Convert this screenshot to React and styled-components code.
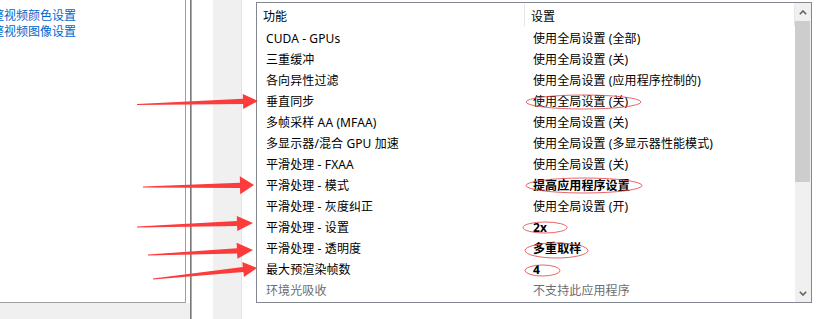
import styled, { createGlobalStyle } from "styled-components";

const GlobalStyle = createGlobalStyle`
  html, body {
    margin: 0;
    padding: 0;
    background: #ffffff;
  }
  body {
    font-family: "Noto Sans", "Noto Sans CJK SC", sans-serif;
    font-size: 12px;
  }
`;

const Page = styled.div`
  position: relative;
  display: flex;
  width: 827px;
  height: 319px;
  overflow: hidden;
  background: #ffffff;
`;

const LeftColumn = styled.div`
  display: flex;
  flex-direction: column;
  width: 190px;
  background: #f0f0f0;
`;

const LeftTop = styled.div`
  display: flex;
  height: 303px;
  background: #ffffff;
`;

const TreePanel = styled.div`
  width: 186px;
  box-sizing: border-box;
  border-right: 1px solid #a0a0a0;
  border-bottom: 1px solid #a0a0a0;
  padding-top: 7px;
  overflow: hidden;
`;

const TreeLink = styled.div`
  margin-left: -8px;
  color: #0066cc;
  line-height: 16px;
  white-space: nowrap;
  font-family: "Noto Sans CJK SC", sans-serif;
`;

const Splitter = styled.div`
  width: 1px;
  border-left: 1px solid #7a7a7a;
  background: #a9a9a9;
`;

const Gutter = styled.div`
  display: flex;
  width: 64px;
`;

const GutterStrip = styled.div`
  margin-left: 21px;
  width: 28px;
  background: #f0f0f0;
  border-right: 1px solid #e3e3e3;
`;

const RightArea = styled.div`
  flex: 1;
  padding-top: 2px;
`;

const ListBox = styled.div`
  display: flex;
  width: 556px;
  height: 301px;
  box-sizing: border-box;
  border: 1px solid #828790;
  background: #ffffff;
  overflow: hidden;
`;

const ListBody = styled.div`
  flex: 1;
  display: flex;
  flex-direction: column;
  overflow: hidden;
`;

const HeaderRow = styled.div`
  display: grid;
  grid-template-columns: 268px 1fr;
  height: 25px;
  flex-shrink: 0;
`;

const HeaderCell = styled.div`
  display: flex;
  align-items: center;
  padding-left: ${(p) => p.$pad}px;
  border-right: 1px solid #e5e5e5;
  margin: 1px 0 2px;
  color: #000;
  font-family: "Noto Sans CJK SC", sans-serif;
`;

const Row = styled.div`
  display: grid;
  grid-template-columns: 268px 1fr;
  height: 21px;
  flex-shrink: 0;
  align-items: center;
  color: ${(p) => (p.$disabled ? "#6d6d6d" : "#000")};
`;

const Cell = styled.div`
  padding-left: ${(p) => p.$pad}px;
  white-space: nowrap;
  font-weight: ${(p) => (p.$bold ? 700 : 400)};
  line-height: 21px;
  letter-spacing: 0.1px;
`;

const Scrollbar = styled.div`
  display: flex;
  flex-direction: column;
  width: 16px;
  background: #f0f0f0;
`;

const ScrollButton = styled.div`
  display: flex;
  align-items: center;
  justify-content: center;
  height: 18px;
  flex-shrink: 0;
`;

const Thumb = styled.div`
  height: 161px;
  margin: 0 1px 0 0;
  background: #cdcdcd;
`;

const Track = styled.div`
  flex: 1;
`;

const Overlay = styled.svg`
  position: absolute;
  left: 0;
  top: 0;
  pointer-events: none;
`;

const rows = [
  ["CUDA - GPUs", "使用全局设置 (全部)"],
  ["三重缓冲", "使用全局设置 (关)"],
  ["各向异性过滤", "使用全局设置 (应用程序控制的)"],
  ["垂直同步", "使用全局设置 (关)"],
  ["多帧采样 AA (MFAA)", "使用全局设置 (关)"],
  ["多显示器/混合 GPU 加速", "使用全局设置 (多显示器性能模式)"],
  ["平滑处理 - FXAA", "使用全局设置 (关)"],
  ["平滑处理 - 模式", "提高应用程序设置", true],
  ["平滑处理 - 灰度纠正", "使用全局设置 (开)"],
  ["平滑处理 - 设置", "2x", true],
  ["平滑处理 - 透明度", "多重取样", true],
  ["最大预渲染帧数", "4", true],
  ["环境光吸收", "不支持此应用程序", false, true],
];

// tail x, tail y, tip x, tip y, head length, head half width
const arrows = [
  [137, 104.5, 258, 101, 15, 7.5],
  [143, 187, 254, 185, 14, 9],
  [137, 227, 253, 223, 16, 7.5],
  [148, 255, 253, 250, 16, 8],
  [153, 279, 257, 268, 14, 7.5],
];

const ellipses = [
  [583.5, 102, 57.5, 7],
  [584, 185.5, 58, 7.5],
  [545, 227.5, 22, 5.5],
  [556.5, 250.5, 31.5, 7.5],
  [542.5, 270.5, 17.5, 5.5],
];

function arrowPoints([tx, ty, hx, hy, len, half]) {
  const dx = hx - tx;
  const dy = hy - ty;
  const d = Math.hypot(dx, dy);
  const ux = dx / d;
  const uy = dy / d;
  const nx = -uy;
  const ny = ux;
  const bx = hx - ux * len;
  const by = hy - uy * len;
  const p = (x, y) => `${x.toFixed(1)},${y.toFixed(1)}`;
  return [
    p(tx + nx * 0.4, ty + ny * 0.4),
    p(bx + nx * 2.6, by + ny * 2.6),
    p(bx + nx * half, by + ny * half),
    p(hx, hy),
    p(bx - nx * half, by - ny * half),
    p(bx - nx * 2.6, by - ny * 2.6),
    p(tx - nx * 0.4, ty - ny * 0.4),
  ].join(" ");
}

function Chevron({ down }) {
  return (
    <svg width="8" height="5" viewBox="0 0 8 5">
      <path
        d={down ? "M0.8 0.8 L4 4 L7.2 0.8" : "M0.8 4.2 L4 1 L7.2 4.2"}
        fill="none"
        stroke="#606060"
        strokeWidth="1.6"
      />
    </svg>
  );
}

export default function App() {
  return (
    <Page>
      <GlobalStyle />
      <LeftColumn>
        <LeftTop>
          <TreePanel>
            <TreeLink>整视频颜色设置</TreeLink>
            <TreeLink>整视频图像设置</TreeLink>
          </TreePanel>
        </LeftTop>
      </LeftColumn>
      <Splitter />
      <Gutter>
        <GutterStrip />
      </Gutter>
      <RightArea>
        <ListBox>
          <ListBody>
            <HeaderRow>
              <HeaderCell $pad={6}>功能</HeaderCell>
              <HeaderCell $pad={6}>设置</HeaderCell>
            </HeaderRow>
            {rows.map(([name, value, bold, disabled]) => (
              <Row key={name} $disabled={disabled}>
                <Cell $pad={9}>{name}</Cell>
                <Cell $pad={8} $bold={bold}>
                  {value}
                </Cell>
              </Row>
            ))}
          </ListBody>
          <Scrollbar>
            <ScrollButton>
              <Chevron />
            </ScrollButton>
            <Thumb />
            <Track />
            <ScrollButton>
              <Chevron down />
            </ScrollButton>
          </Scrollbar>
        </ListBox>
      </RightArea>
      <Overlay width="827" height="319">
        {arrows.map((a, i) => (
          <polygon key={i} points={arrowPoints(a)} fill="#fd3b3b" />
        ))}
        {ellipses.map(([cx, cy, rx, ry], i) => (
          <ellipse
            key={i}
            cx={cx}
            cy={cy}
            rx={rx}
            ry={ry}
            fill="none"
            stroke="#e5484d"
            strokeWidth="1"
            opacity="0.85"
          />
        ))}
      </Overlay>
    </Page>
  );
}
